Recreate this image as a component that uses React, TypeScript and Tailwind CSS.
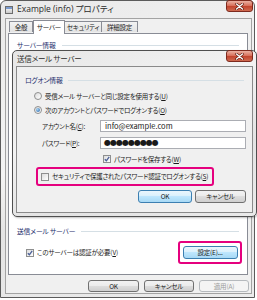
import React from "react";

const jp = "font-['Noto_Sans_CJK_JP',sans-serif] [font-feature-settings:'palt']";

function CloseButton() {
  return (
    <div className="w-[27px] h-[12px] rounded-[3px] border border-[#7d2a1e] bg-[linear-gradient(#eab1a3,#d9735e_45%,#c2452f_55%,#cf6a50)] flex items-center justify-center">
      <svg width="9" height="7" viewBox="0 0 9 7">
        <path d="M1.5 1 L7.5 6 M7.5 1 L1.5 6" stroke="#5a1a10" strokeWidth="2.6" strokeLinecap="round" />
        <path d="M1.5 1 L7.5 6 M7.5 1 L1.5 6" stroke="#ffffff" strokeWidth="1.4" strokeLinecap="round" />
      </svg>
    </div>
  );
}

function Button({ label, primary, disabled, w }: { label: string; primary?: boolean; disabled?: boolean; w: string }) {
  const tone = disabled
    ? "border-[#b5b9bd] bg-[#f4f4f4] text-[#9a9a9a]"
    : primary
    ? "border-[#3c7fb1] bg-[linear-gradient(#eaf6fd,#d9f0fc_50%,#bee6fd_50%,#a7d9f5)] text-[#1a1a1a]"
    : "border-[#707070] bg-[linear-gradient(#f2f2f2,#ebebeb_50%,#dddddd_50%,#cfcfcf)] text-[#1a1a1a]";
  return (
    <div className={`${w} h-full rounded-[3px] border flex items-center justify-center text-[6.5px] tracking-[-0.2px] leading-none ${tone}`}>
      {label}
    </div>
  );
}

function Checkbox({ checked }: { checked?: boolean }) {
  return (
    <div className="w-[8px] h-[8px] shrink-0 border border-[#8e8f8f] bg-[linear-gradient(135deg,#dcdcdc,#ffffff)] flex items-center justify-center">
      {checked && (
        <svg width="6" height="6" viewBox="0 0 6 6">
          <path d="M0.8 3.2 L2.4 4.8 L5.2 0.8" stroke="#4a5f97" strokeWidth="1.3" fill="none" />
        </svg>
      )}
    </div>
  );
}

function Radio({ checked }: { checked?: boolean }) {
  return (
    <div className="w-[8px] h-[8px] shrink-0 rounded-full border border-[#8e8f8f] bg-[linear-gradient(135deg,#dcdcdc,#ffffff)] flex items-center justify-center">
      {checked && <div className="w-[4px] h-[4px] rounded-full bg-[radial-gradient(circle_at_35%_35%,#a9d4f2,#1f5fa8)]" />}
    </div>
  );
}

function GroupHeader({ title }: { title: string }) {
  return (
    <div className="h-[10px] flex items-center gap-[6px]">
      <span className="text-[6.8px] tracking-[-0.2px] leading-none text-[#1e2f6e]">{title}</span>
      <div className="flex-1 h-px bg-[#d5dfe5]" />
    </div>
  );
}

function Underline({ k }: { k: string }) {
  return <span className="underline">{k}</span>;
}

export default function App() {
  return (
    <div className={`w-[257px] h-[300px] bg-white ${jp}`}>
      <div className="relative w-[255px] h-[298px] rounded-t-[6px] border border-[#5b5b5b] bg-[linear-gradient(160deg,#e9e9e9,#f4f4f4_45%,#e4e4e4_60%,#ececec)] pl-[4px] pr-[2px] flex flex-col">
        {/* title bar */}
        <div className="h-[17px] flex items-center gap-[4px]">
          <div className="w-[8px] h-[8px] border border-[#6d6d6d] bg-[linear-gradient(#ffffff,#c9c9c9)] flex flex-col">
            <div className="h-[2px] bg-[#7b9ccf]" />
          </div>
          <span className="text-[8.5px] leading-none text-[#2a2a2a] font-['Open_Sans','Noto_Sans_CJK_JP',sans-serif]">Example (info) プロパティ</span>
        </div>
        <div className="absolute right-[1px] top-[-1px]">
          <CloseButton />
        </div>

        {/* body */}
        <div className="flex-1 mb-[3px] border border-[#a3a3a3] bg-[#f0f0f0] flex flex-col">
          {/* tabs */}
          <div className="h-[14px] pl-[3px] flex items-end text-[6.5px] tracking-[-0.2px] leading-none text-[#1a1a1a] whitespace-nowrap">
            <div className="h-[11px] w-[24px] mb-px border border-[#898c95] border-b-0 bg-[linear-gradient(#f2f2f2,#e3e3e3)] flex items-center justify-center">全般</div>
            <div className="relative z-10 h-[14px] w-[32px] -mb-px border border-[#898c95] border-b-0 bg-white flex items-center justify-center">サーバー</div>
            <div className="h-[11px] w-[37px] mb-px border border-[#898c95] border-b-0 border-l-0 bg-[linear-gradient(#f2f2f2,#e3e3e3)] flex items-center justify-center">セキュリティ</div>
            <div className="h-[11px] w-[36px] mb-px border border-[#898c95] border-b-0 border-l-0 bg-[linear-gradient(#f2f2f2,#e3e3e3)] flex items-center justify-center">詳細設定</div>
          </div>

          {/* panel */}
          <div className="ml-[2px] w-[240px] h-[242px] border border-[#898c95] bg-white flex flex-col px-[8px] pt-[6px]">
            <GroupHeader title="サーバー情報" />
            <div className="mt-[176px]">
              <GroupHeader title="送信メール サーバー" />
            </div>
            <div className="mt-[5px] h-[23px] pl-[9px] flex items-center justify-between">
              <div className="flex items-center gap-[3px] text-[6.5px] tracking-[-0.2px] leading-none text-[#1a1a1a]">
                <Checkbox checked />
                <span>
                  このサーバーは認証が必要(<Underline k="V" />)
                </span>
              </div>
              <div className="h-[23px] w-[64px] -mr-[3px] rounded-[3px] border-2 border-[#e5007e] flex items-center justify-center py-[3px]">
                <div className="h-[13px]">
                  <Button label="設定(E)..." primary w="w-[55px]" />
                </div>
              </div>
            </div>
          </div>

          {/* bottom buttons */}
          <div className="mt-[5px] h-[12px] pr-[2px] flex justify-end gap-[5px]">
            <Button label="OK" w="w-[51px]" />
            <Button label="キャンセル" w="w-[50px]" />
            <Button label="適用(A)" disabled w="w-[50px]" />
          </div>
        </div>

        {/* inner dialog */}
        <div className="absolute left-[11px] top-[49px] w-[245px] h-[167px] rounded-[5px] border border-[#4f4f4f] bg-[linear-gradient(160deg,#e6e6e6,#f3f3f3_40%,#e3e3e3_70%,#eaeaea)] shadow-[1px_1px_2px_rgba(0,0,0,0.25)] flex flex-col">
          <div className="h-[15px] pl-[4px] flex items-center">
            <span className="text-[7.5px] tracking-[-0.2px] leading-none text-[#2a2a2a]">送信メール サーバー</span>
          </div>
          <div className="absolute right-[3px] top-[-1px]">
            <CloseButton />
          </div>
          <div className="mx-[3px] mb-[3px] flex-1 border border-[#8a8a8a] bg-[#f0f0f0] flex flex-col text-[6.5px] tracking-[-0.25px] leading-none text-[#1a1a1a] whitespace-nowrap">
            <div className="mt-[8px] px-[8px]">
              <GroupHeader title="ログオン情報" />
            </div>
            <div className="mt-[6px] h-[10px] pl-[17px] flex items-center gap-[3px]">
              <Radio />
              <span>
                受信メール サーバーと同じ設定を使用する(<Underline k="U" />)
              </span>
            </div>
            <div className="mt-[4px] h-[10px] pl-[17px] flex items-center gap-[3px]">
              <Radio checked />
              <span>
                次のアカウントとパスワードでログオンする(<Underline k="O" />)
              </span>
            </div>
            <div className="mt-[5px] h-[12px] pl-[25px] pr-[6px] flex items-center">
              <span className="w-[58px]">
                アカウント名(<Underline k="C" />):
              </span>
              <div className="flex-1 h-full border border-[#abadb3] bg-white pl-[4px] flex items-center text-[7.5px] tracking-normal">info@example.com</div>
            </div>
            <div className="mt-[5px] h-[12px] pl-[25px] pr-[6px] flex items-center">
              <span className="w-[58px]">
                パスワード(<Underline k="P" />):
              </span>
              <div className="flex-1 h-full border border-[#abadb3] bg-white pl-[3px] flex items-center text-[8px] tracking-[-1px] font-['DejaVu_Sans',sans-serif]">●●●●●●●●●</div>
            </div>
            <div className="mt-[5px] h-[10px] pl-[86px] flex items-center gap-[3px]">
              <Checkbox checked />
              <span>
                パスワードを保存する(<Underline k="W" />)
              </span>
            </div>
            <div className="mt-[3px] ml-[19px] w-[178px] h-[19px] rounded-[3px] border-2 border-[#e5007e] pl-[3px] flex items-center gap-[3px]">
              <Checkbox />
              <span>
                セキュリティで保護されたパスワード認証でログオンする(<Underline k="S" />)
              </span>
            </div>
            <div className="mt-[4px] h-[13px] pr-[6px] flex justify-end gap-[3px]">
              <Button label="OK" primary w="w-[54px]" />
              <Button label="キャンセル" w="w-[51px]" />
            </div>
          </div>
        </div>
      </div>
    </div>
  );
}
